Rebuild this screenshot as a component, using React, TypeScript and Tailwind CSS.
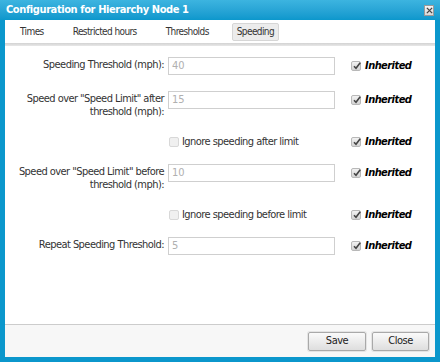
import React from "react";

const font = { fontFamily: '"DejaVu Sans Condensed", "DejaVu Sans", sans-serif' };

function InhCheck() {
  return (
    <span className="relative inline-block w-[10px] h-[10px] rounded-[2px] border border-[#b8b8b8] bg-gradient-to-b from-[#f2f2f2] to-[#d4d4d4]">
      <svg viewBox="0 0 10 10" className="absolute left-[0px] top-[-1px] w-[10px] h-[10px]">
        <path d="M2 5.2 L4 7.2 L8.2 1.8" fill="none" stroke="#444" strokeWidth="1.6" />
      </svg>
    </span>
  );
}

function Inherited() {
  return (
    <div className="flex items-center gap-[4px] h-[18px] ml-[16px]">
      <InhCheck />
      <span className="text-[11px] font-bold italic text-black tracking-[-0.55px]">Inherited</span>
    </div>
  );
}

function InputRow({ label, value, h, mt }: { label: React.ReactNode; value: string; h: string; mt: string }) {
  return (
    <div className={`flex items-start ${h} ${mt}`}>
      <div className="w-[159px] text-right text-[11px] leading-[13px] text-[#333] pt-[1px] tracking-[-0.55px]">{label}</div>
      <div className="ml-[4px] w-[167px] h-[18px] border border-[#cfcfcf] bg-white px-[3px] flex items-center text-[11px] text-[#b0b0b0]">{value}</div>
      <Inherited />
    </div>
  );
}

function CheckRow({ label, h, mt }: { label: string; h: string; mt: string }) {
  return (
    <div className={`flex items-center ${h} ${mt}`}>
      <div className="w-[159px]" />
      <div className="ml-[4px] w-[167px] flex items-center gap-[3px]">
        <span className="inline-block w-[10px] h-[10px] rounded-[2px] border border-[#d8d8d8] bg-[#f0f0f0] ml-[1px]" />
        <span className="text-[11px] text-[#333] tracking-[-0.55px]">{label}</span>
      </div>
      <Inherited />
    </div>
  );
}

export default function App() {
  return (
    <div className="w-[440px] h-[362px] bg-[#0b97cc] flex flex-col" style={font}>
      <div className="h-[20px] flex items-center justify-between pl-[6px] pr-[6px] bg-gradient-to-b from-[#3cb4e0] to-[#0b97cc]">
        <span className="text-[11px] font-bold text-white tracking-[-0.4px]">Configuration for Hierarchy Node 1</span>
        <span className="w-[10px] h-[11px] bg-gradient-to-b from-[#f4f4f4] to-[#d8d8d8] border border-[#9a9a9a] flex items-center justify-center mt-[1px]">
          <svg viewBox="0 0 8 8" className="w-[7px] h-[7px]">
            <path d="M1 1 L7 7 M7 1 L1 7" stroke="#444" strokeWidth="1.5" />
          </svg>
        </span>
      </div>
      <div className="flex-1 mx-[5px] mb-[5px] bg-white flex flex-col">
        <div className="h-[23px] flex items-center text-[10px] text-[#333] tracking-[-0.6px]">
          <span className="ml-[15px]">Times</span>
          <span className="ml-[29px]">Restricted hours</span>
          <span className="ml-[29px]">Thresholds</span>
          <span className="ml-[23px] h-[18px] px-[4px] flex items-center bg-[#ececec] border border-[#d6d6d6] rounded-[2px]">Speeding</span>
        </div>
        <div className="h-[3px] bg-gradient-to-b from-[#d2d2d2] to-[#e8e8e8]" />
        <div className="flex-1 flex flex-col">
          <InputRow label="Speeding Threshold (mph):" value="40" h="h-[18px]" mt="mt-[11px]" />
          <InputRow label={<>Speed over "Speed Limit" after<br />threshold (mph):</>} value="15" h="h-[28px]" mt="mt-[16px]" />
          <CheckRow label="Ignore speeding after limit" h="h-[14px]" mt="mt-[16px]" />
          <InputRow label={<>Speed over "Speed Limit" before<br />threshold (mph):</>} value="10" h="h-[28px]" mt="mt-[15px]" />
          <CheckRow label="Ignore speeding before limit" h="h-[14px]" mt="mt-[16px]" />
          <InputRow label="Repeat Speeding Threshold:" value="5" h="h-[18px]" mt="mt-[15px]" />
        </div>
        <div className="h-[33px] border-t border-[#cccccc] bg-[#f7f7f7] flex items-center justify-end pr-[6px] gap-[6px]">
          <button className="w-[58px] h-[19px] rounded-[2px] border border-[#a9a9a9] bg-gradient-to-b from-[#fafafa] to-[#dedede] text-[11px] text-[#222] shadow-[0_0_0_1px_#e4e4e4] tracking-[-0.5px]">Save</button>
          <button className="w-[57px] h-[19px] rounded-[2px] border border-[#a9a9a9] bg-gradient-to-b from-[#fafafa] to-[#dedede] text-[11px] text-[#222] shadow-[0_0_0_1px_#e4e4e4] tracking-[-0.5px]">Close</button>
        </div>
      </div>
    </div>
  );
}
